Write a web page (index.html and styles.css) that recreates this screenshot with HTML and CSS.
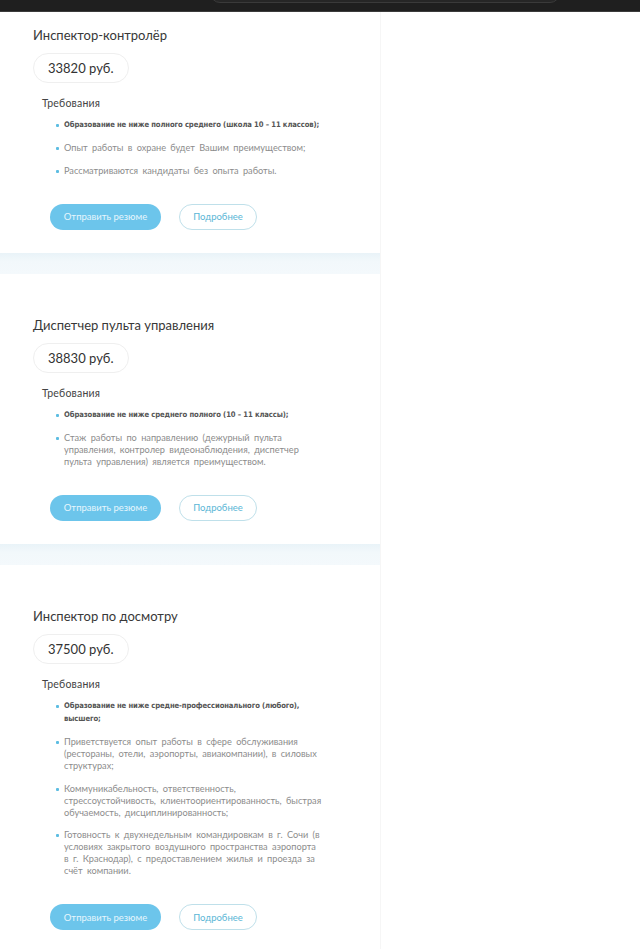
FILE: index.html
```html
<!DOCTYPE html>
<html lang="ru">
<head>
<meta charset="utf-8">
<title>Вакансии</title>
<link rel="stylesheet" href="styles.css">
</head>
<body>
<header class="topbar"><div class="topbar-pill"></div></header>
<main class="list">
  <section class="card card-first">
    <h2 class="card-title">Инспектор-контролёр</h2>
    <div class="price">33820 руб.</div>
    <h3 class="req-title">Требования</h3>
    <ul class="req-list">
      <li class="req req-bold">Образование не ниже полного среднего (школа 10 – 11 классов);</li>
      <li class="req">Опыт работы в охране будет Вашим преимуществом;</li>
      <li class="req">Рассматриваются кандидаты без опыта работы.</li>
    </ul>
    <div class="actions">
      <a class="btn btn-fill">Отправить резюме</a>
      <a class="btn btn-outline">Подробнее</a>
    </div>
  </section>
  <div class="band"></div>
  <section class="card">
    <h2 class="card-title">Диспетчер пульта управления</h2>
    <div class="price">38830 руб.</div>
    <h3 class="req-title">Требования</h3>
    <ul class="req-list">
      <li class="req req-bold">Образование не ниже среднего полного (10 – 11 классы);</li>
      <li class="req">Стаж работы по направлению (дежурный пульта управления, контролер видеонаблюдения, диспетчер пульта управления) является преимуществом.</li>
    </ul>
    <div class="actions">
      <a class="btn btn-fill">Отправить резюме</a>
      <a class="btn btn-outline">Подробнее</a>
    </div>
  </section>
  <div class="band"></div>
  <section class="card">
    <h2 class="card-title">Инспектор по досмотру</h2>
    <div class="price">37500 руб.</div>
    <h3 class="req-title">Требования</h3>
    <ul class="req-list">
      <li class="req req-bold">Образование не ниже средне-профессионального (любого), высшего;</li>
      <li class="req">Приветствуется опыт работы в сфере обслуживания (рестораны, отели, аэропорты, авиакомпании), в силовых структурах;</li>
      <li class="req">Коммуникабельность, ответственность, стрессоустойчивость, клиентоориентированность, быстрая обучаемость, дисциплинированность;</li>
      <li class="req">Готовность к двухнедельным командировкам в г. Сочи (в условиях закрытого воздушного пространства аэропорта в&nbsp;г. Краснодар), с предоставлением жилья и проезда за счёт компании.</li>
    </ul>
    <div class="actions">
      <a class="btn btn-fill">Отправить резюме</a>
      <a class="btn btn-outline">Подробнее</a>
    </div>
  </section>
</main>
</body>
</html>
```
FILE: styles.css
```css
* { box-sizing: border-box; }
html, body { margin: 0; padding: 0; background: #fff; }
body { font-family: Lato, "Noto Sans", sans-serif; color: #333; }

.topbar {
  height: 12px;
  background: #1f1f1f;
  border-bottom: 1px solid #3c3c3c;
  display: flex;
  overflow: hidden;
}
.topbar-pill {
  margin-left: 210px;
  margin-top: -18px;
  width: 350px;
  height: 21px;
  border-radius: 10px;
  background: #262626;
  border: 1px solid #3a3a3a;
}

.list {
  width: 381px;
  border-right: 1px solid #f6f6f6;
  min-height: 937px;
}

.card {
  padding: 42px 0 23px 33px;
}
.card-first { padding-top: 14px; }

.card-title {
  margin: 0;
  font-size: 13px;
  line-height: 18px;
  font-weight: 400;
  color: #383838;
}

.price {
  margin-top: 9px;
  display: inline-flex;
  align-items: center;
  height: 30px;
  padding: 0 14px;
  border: 1px solid #efefef;
  border-radius: 15px;
  font-size: 13px;
  color: #333;
}

.req-title {
  margin: 13px 0 0 9px;
  font-size: 10.5px;
  line-height: 14px;
  font-weight: 400;
  color: #444;
  letter-spacing: 0.2px;
}

.req-list {
  list-style: none;
  margin: 8px 0 0 23px;
  padding: 0;
  width: 274px;
  display: flex;
  flex-direction: column;
  gap: 10.5px;
}
.req {
  display: flex;
  gap: 5px;
  font-size: 9.2px;
  line-height: 12px;
  word-spacing: 2px;
  color: #8c8c8c;
}
.req::before {
  content: "";
  flex: 0 0 3px;
  height: 3px;
  margin-top: 5px;
  background: #5cbde2;
  border-radius: 1px;
}
.req-bold {
  font-family: "DejaVu Sans", sans-serif;
  font-stretch: condensed;
  font-weight: 700;
  color: #555;
  font-size: 7.6px;
  line-height: 13.5px;
  word-spacing: 0;
  letter-spacing: -0.1px;
}
.req-bold::before { margin-top: 6px; }

.actions {
  display: flex;
  gap: 18px;
  margin: 27px 0 0 17px;
}
.btn {
  display: inline-flex;
  align-items: center;
  justify-content: center;
  height: 26px;
  border-radius: 13px;
  font-size: 9.5px;
  cursor: pointer;
}
.btn-fill {
  width: 111px;
  background: #6cc5eb;
  color: #e6f6fd;
}
.btn-outline {
  width: 78px;
  border: 1px solid #bfe0ea;
  color: #5ab6d6;
}

.band {
  height: 21px;
  background: linear-gradient(#e9f3f8, #f2f8fb 40%, #f4f9fc);
}
```
